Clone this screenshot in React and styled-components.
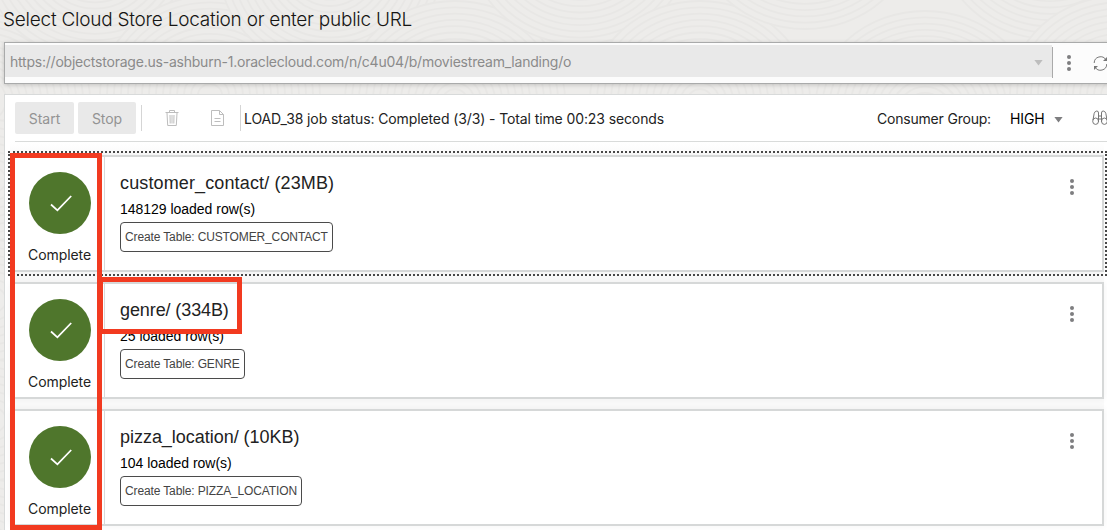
import React from "react";
import styled, { createGlobalStyle } from "styled-components";

const Global = createGlobalStyle`
  * { box-sizing: border-box; }
  body { margin: 0; overflow: hidden; background: #edecea; font-family: Inter, "Liberation Sans", sans-serif; }
`;

const Page = styled.main`
  position: relative;
  width: 1107px;
  height: 530px;
  overflow: hidden;
  padding-left: 4px;
`;

const Texture = styled.svg`
  position: absolute;
  inset: 0;
  z-index: -1;
`;

const Title = styled.h1`
  margin: 0 0 0 -1px;
  height: 42px;
  line-height: 40px;
  font-size: 19px;
  font-weight: 300;
  letter-spacing: ${(p) => p.$track}px;
  color: #161513;
  white-space: nowrap;
`;

const SearchBar = styled.div`
  display: flex;
  width: 1112px;
  height: 42px;
  padding-top: 2px;
  background: #fcfcfc;
  border: 1px solid #a9aaaa;
  box-shadow: 0 1px 4px rgba(0, 0, 0, 0.18);
`;

const UrlField = styled.div`
  display: flex;
  align-items: center;
  justify-content: space-between;
  width: 1047px;
  height: 32px;
  padding: 0 9px 0 5px;
  background: #e9e9e9;
  color: #8b8b8b;
  font-size: 14px;
  letter-spacing: ${(p) => p.$track}px;
`;

const Divider = styled.span`
  width: 1px;
  height: ${(p) => p.$height}px;
  margin: ${(p) => p.$margin};
  background: ${(p) => p.$color};
`;

const Caret = styled.span`
  width: 9px;
  height: 6px;
  margin: 3px 0 0 1px;
  background: ${(p) => p.$color};
  clip-path: polygon(0 0, 100% 0, 50% 100%);
`;

const Dots = styled.span`
  display: flex;
  flex-direction: column;
  gap: 2px;
  margin: ${(p) => p.$margin};
  &::before, &::after, i { content: ""; width: 4px; height: 4px; border-radius: 50%; background: #7e7e80; }
`;

const SearchRefresh = styled.svg`
  flex: none;
  margin: 11px 0 0 22px;
`;

const Panel = styled.section`
  width: 1112px;
  height: 440px;
  margin-top: 10px;
  background: #fff;
  border: 1px solid #d8dada;
`;

const Toolbar = styled.div`
  display: flex;
  align-items: center;
  height: 47px;
  margin-left: 10px;
  border-bottom: 1px solid #d9dbda;
`;

const Button = styled.button`
  width: ${(p) => p.$width}px;
  height: 32px;
  margin-right: 4px;
  padding: 0;
  border: 0;
  border-radius: 2px;
  background: #e9e9e9;
  color: #939393;
  font: 14px Inter, sans-serif;
  letter-spacing: -0.05px;
`;

const ToolIcon = styled.svg`
  flex: none;
  margin-left: ${(p) => p.$left}px;
  fill: none;
  stroke: ${(p) => p.$color || "#bdbdbd"};
`;

const Status = styled.span`
  width: 633px;
  margin-left: 3px;
  color: #222;
  font-size: 14px;
  letter-spacing: ${(p) => p.$track}px;
  white-space: nowrap;
`;

const GroupLabel = styled.span`
  width: 133px;
  color: #222;
  font-size: 14px;
  letter-spacing: ${(p) => p.$track}px;
`;

const GroupValue = styled.span`
  width: 43px;
  color: #000;
  font-size: 14px;
  letter-spacing: ${(p) => p.$track}px;
`;

const JobList = styled.div`
  display: flex;
  flex-direction: column;
  gap: 10px;
  width: 1094px;
  margin-left: 5px;
  padding-top: 13px;
  background: linear-gradient(#fff, #fafafa 13px);
`;

const Job = styled.article`
  position: relative;
  display: flex;
  height: 117px;
  flex: none;
  background: #fff;
  border: 2px solid #d6d8d8;
  box-shadow: 0 0 7px rgba(0, 0, 0, 0.05);
`;

const Focus = styled.span`
  position: absolute;
  inset: -6px -5px -6px -4px;
  border: 2px dotted #484848;
`;

const State = styled.div`
  display: flex;
  flex-direction: column;
  align-items: center;
  width: 93px;
  padding: 15px 0 0 3px;
  border-right: 1px solid #d8dada;
  color: #222;
  font-size: 14px;
  letter-spacing: -0.08px;
`;

const StateCircle = styled.svg`
  display: block;
  margin-bottom: 12px;
`;

const Details = styled.div`
  display: flex;
  flex-direction: column;
  align-items: flex-start;
  flex: 1;
  padding: 14px 0 0 15px;
  font-family: "Liberation Sans", Arial, sans-serif;
`;

const Name = styled.div`
  height: 26px;
  line-height: 24px;
  color: #222;
  font-size: 18px;
  letter-spacing: ${(p) => p.$track}px;
`;

const Rows = styled.div`
  height: 25px;
  line-height: 25px;
  color: #000;
  font-size: 14px;
  letter-spacing: ${(p) => p.$track}px;
`;

const Target = styled.div`
  width: ${(p) => p.$width}px;
  height: 30px;
  padding-left: 4px;
  border: 1px solid #4b4b4b;
  border-radius: 4px;
  color: #444;
  font-size: 12px;
  line-height: 28px;
  letter-spacing: ${(p) => p.$track}px;
  white-space: nowrap;
`;

const Highlight = styled.span`
  position: absolute;
  left: ${(p) => p.$x}px;
  top: ${(p) => p.$y}px;
  width: ${(p) => p.$w}px;
  height: ${(p) => p.$h}px;
  border: 5px solid #f23a20;
`;

const jobs = [
  { name: "customer_contact/ (23MB)", track: 0.13, rows: "148129 loaded row(s)", table: "CUSTOMER_CONTACT", width: 213, focused: true },
  { name: "genre/ (334B)", track: -0.1, rows: "25 loaded row(s)", table: "GENRE", width: 125 },
  { name: "pizza_location/ (10KB)", track: -0.03, rows: "104 loaded row(s)", table: "PIZZA_LOCATION", width: 182 },
];

const swirls = [[-20, 100], [95, -40], [210, 95], [330, -30], [455, 100], [580, -55], [700, 100], [805, -70], [925, 110], [1050, -60], [1120, 95]];

function Background() {
  return (
    <Texture width="1107" height="530" fill="#edecea" stroke="#e8e7e5" strokeWidth="1.8">
      {swirls.map(([x, y]) =>
        [110, 103, 96, 89, 82, 75, 68, 61, 54, 47, 40, 33, 26, 19, 12].map((r) => (
          <ellipse key={`${x}-${r}`} cx={x} cy={y} rx={r} ry={r * 0.9} />
        ))
      )}
      {[180, 300, 420, 540].map((y) =>
        [60, 52, 44, 36, 28, 20, 12].map((r) => <circle key={`${y}-${r}`} cx="-6" cy={y} r={r} />)
      )}
    </Texture>
  );
}

export default function App() {
  return (
    <>
      <Global />
      <Page>
        <Background />
        <Title $track={-0.24}><span>Select Cloud Store Location or enter public URL</span></Title>
        <SearchBar>
          <UrlField $track={-0.22}>
            <span>https://objectstorage.us-ashburn-1.oraclecloud.com/n/c4u04/b/moviestream_landing/o</span>
            <Caret $color="#bdbdbd" />
          </UrlField>
          <Divider $height={31} $margin="2px 0 0 0" $color="#aaa" />
          <Dots $margin="10px 0 0 14px"><i /></Dots>
          <SearchRefresh width="15" height="15" viewBox="0 0 15 15" fill="none" stroke="#777">
            <path d="M1.2 7A6.3 6.3 0 0 1 13 4M13.8 8A6.3 6.3 0 0 1 2 11" />
            <path d="M14 1v4h-4zM1 14v-4h4z" fill="#777" stroke="none" />
          </SearchRefresh>
        </SearchBar>
        <Panel>
          <Toolbar>
            <Button $width={59}>Start</Button>
            <Button $width={58}>Stop</Button>
            <Divider $height={26} $margin="0 0 0 1px" $color="#d5d5d5" />
            <ToolIcon $left={23} width="15" height="18" viewBox="0 0 15 18">
              <path d="M.5 3.5h13M4.5 3V1.5h5V3M2 4l.7 12.5h8.6L12 4M5 6l.2 8.5M7 6v8.5M9 6l-.2 8.5" />
            </ToolIcon>
            <ToolIcon $left={31} width="14" height="18" viewBox="0 0 14 18">
              <path d="M.5 1.5h8l4 4v11H.5zM8.5 1.5v4h4M3.5 9.5h6M3.5 12.5h6" />
            </ToolIcon>
            <Divider $height={26} $margin="0 0 0 15px" $color="#d5d5d5" />
            <Status $track={-0.11}><span>LOAD_38 job status: Completed (3/3) - Total time 00:23 seconds</span></Status>
            <GroupLabel $track={-0.2}><span>Consumer Group:</span></GroupLabel>
            <GroupValue $track={-0.1}><span>HIGH</span></GroupValue>
            <Caret $color="#7e7e80" />
            <ToolIcon $left={29} $color="#777" width="16" height="16" viewBox="0 0 16 16">
              <path d="M1 10 2.2 3.3Q3 1 4.8 1T6.5 3v9M15 10 13.8 3.3Q13 1 11.2 1T9.5 3v9M6.5 6h3M6.5 9h3" />
              <ellipse cx="3.6" cy="11.2" rx="2.9" ry="3.2" />
              <ellipse cx="12.4" cy="11.2" rx="2.9" ry="3.2" />
            </ToolIcon>
          </Toolbar>
          <JobList>
            {jobs.map((job) => (
              <Job key={job.name}>
                <State>
                  <StateCircle width="62" height="62" viewBox="0 0 62 62">
                    <circle cx="31" cy="31" r="31" fill="#4f762c" />
                    <path d="M22 32.5l6.4 5.8L42.2 24" fill="none" stroke="#fff" strokeWidth="1.8" />
                  </StateCircle>
                  <span>Complete</span>
                </State>
                <Details>
                  <Name $track={job.track}>{job.name}</Name>
                  <Rows $track={-0.02}>{job.rows}</Rows>
                  <Target $width={job.width} $track={-0.13}><span>{`Create Table: ${job.table}`}</span></Target>
                </Details>
                <Dots $margin="22px 28px 0 0"><i /></Dots>
                {job.focused && <Focus />}
              </Job>
            ))}
          </JobList>
        </Panel>
        <Highlight $x={10} $y={153} $w={92} $h={377} />
        <Highlight $x={98} $y={277} $w={144} $h={57} />
      </Page>
    </>
  );
}
